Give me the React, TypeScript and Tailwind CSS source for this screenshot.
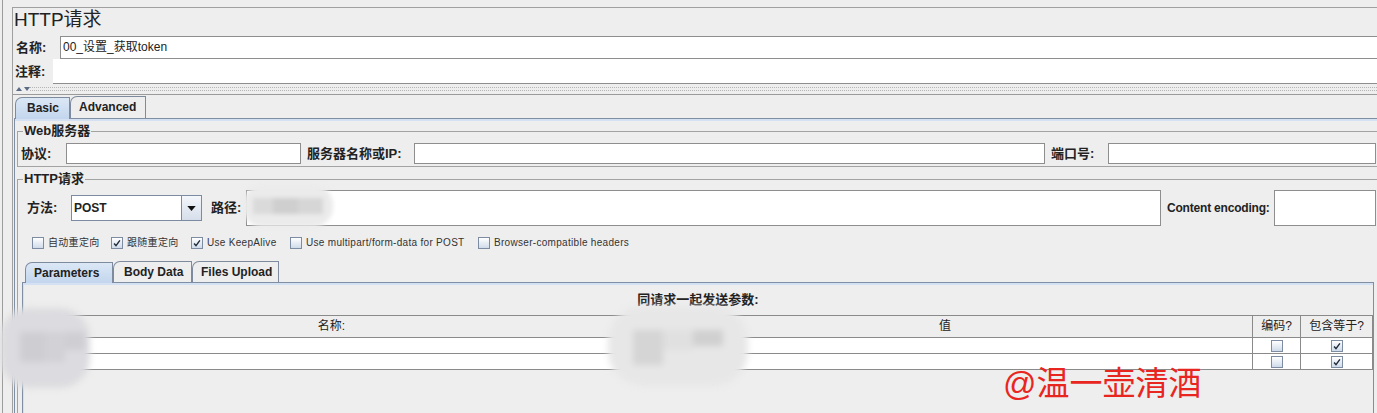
import type { ReactNode } from 'react'

// Swing "Metal" style HTTP sampler panel

const CheckMark = () => (
  <svg viewBox="0 0 12 12" className="w-[10px] h-[10px]">
    <path d="M2.5 6.5 L4.8 9.2 L9.5 2.8" fill="none" stroke="#1e2a3a" strokeWidth="1.7" />
  </svg>
)

function CheckBox({ checked }: { checked?: boolean }) {
  return (
    <span className="flex items-center justify-center w-[12px] h-[12px] shrink-0 border border-[#7d8ca3] bg-linear-to-b from-white to-[#cfdbea]">
      {checked && <CheckMark />}
    </span>
  )
}

function Label({ children, className }: { children: ReactNode; className: string }) {
  return <span className={`shrink-0 text-[13px] leading-[16px] font-bold text-[#222] ${className}`}>{children}</span>
}

function Tab({ label, active, className }: { label: string; active?: boolean; className: string }) {
  return (
    <div
      className={`h-full border-t border-l border-r border-[#7e8b9e] rounded-tl-[7px] text-[12px] leading-[20px] font-bold text-[#222] ${
        active ? 'bg-linear-to-b from-[#dbe7f5] to-[#c3d6ee] -mb-px' : 'bg-[#eeeeee]'
      } ${className}`}
    >
      {label}
    </div>
  )
}

function Group({ title, children, className }: { title: string; children: ReactNode; className: string }) {
  return (
    <fieldset className={`mx-[2px] border border-[#a3a3a3] ${className}`}>
      <legend className="ml-[5px] px-px text-[13px] leading-[14px] font-bold text-[#222]">{title}</legend>
      {children}
    </fieldset>
  )
}

const options = [
  { label: '自动重定向', checked: false, w: 'w-[79px]' },
  { label: '跟随重定向', checked: true, w: 'w-[80px]' },
  { label: 'Use KeepAlive', checked: true, w: 'w-[99px]' },
  { label: 'Use multipart/form-data for POST', checked: false, w: 'w-[188px]' },
  { label: 'Browser-compatible headers', checked: false, w: 'w-[160px]' },
]

const rows = [
  { encode: false, equals: true },
  { encode: false, equals: true },
]

export default function App() {
  return (
    <div className="relative w-[1377px] h-[413px] overflow-hidden bg-[#eeeeee] font-[Liberation_Sans,Noto_Sans_CJK_SC,sans-serif] text-[#222]">
      <div className="h-full pl-[2px]">
        <div className="h-full border-l border-[#9c9c9c] pl-[9px] pt-[7px]">
          <div className="w-[1375px] h-full border-l border-t border-[#a0a0a0]">
            {/* title */}
            <div className="h-[28px] pt-[2px] pl-px text-[19px] leading-[20px]">HTTP请求</div>

            {/* name / comment */}
            <div className="flex h-[23px]">
              <Label className="w-[47px] pl-[3px] self-center">名称:</Label>
              <div className="flex-1 bg-white border border-[#8e8e8e] pl-[2px] text-[12px] leading-[20px]">00_设置_获取token</div>
            </div>
            <div className="flex h-[25px]">
              <Label className="w-[40px] pl-[2px] self-center">注释:</Label>
              <div className="flex-1 bg-white border-b border-[#8e8e8e]" />
            </div>

            {/* splitter */}
            <div className="flex items-center h-[11px] border-b border-[#9a9a9a]">
              <svg viewBox="0 0 14 6" className="ml-[3px] w-[14px] h-[6px] shrink-0">
                <path d="M0 5 L3 1 L6 5 Z" fill="#5a6b85" />
                <path d="M8 1 L14 1 L11 5 Z" fill="#5a6b85" />
              </svg>
              <div className="flex-1 h-[4px] border-y border-dotted border-[#b4b4b4]" />
            </div>

            {/* Basic / Advanced */}
            <div className="mx-px mt-px">
              <div className="flex items-end h-[22px] pl-px">
                <Tab label="Basic" active className="w-[55px] pl-[11px] relative z-10" />
                <Tab label="Advanced" className="w-[76px] pl-[8px]" />
              </div>
              <div className="h-[300px] border-t border-l border-r border-[#7f8ea3] shadow-[inset_0_2px_0_#d3e1f2] pt-[5px]">
                <Group title="Web服务器" className="pb-[2px]">
                  <div className="flex items-center h-[21px] mt-[5px] pl-[3px] pr-[6px]">
                    <Label className="w-[45px]">协议:</Label>
                    <div className="w-[235px] h-full bg-white border border-[#8e8e8e]" />
                    <Label className="ml-[6px] w-[107px]">服务器名称或IP:</Label>
                    <div className="w-[631px] h-full bg-white border border-[#8e8e8e]" />
                    <Label className="ml-[6px] w-[57px]">端口号:</Label>
                    <div className="flex-1 h-full bg-white border border-[#8e8e8e]" />
                  </div>
                </Group>

                <Group title="HTTP请求" className="mt-[5px] h-[260px]">
                  <div className="flex items-center h-[36px] mt-[4px] pl-[9px] pr-[6px]">
                    <Label className="w-[44px]">方法:</Label>
                    <div className="flex w-[131px] h-[26px] bg-white border border-[#7c8ba2]">
                      <span className="flex-1 pl-[2px] text-[12px] leading-[24px] font-bold">POST</span>
                      <span className="flex items-center justify-center w-[20px] h-full border-l border-[#7c8ba2] bg-linear-to-b from-[#f4f7fb] to-[#d5deea]">
                        <svg viewBox="0 0 10 6" className="w-[9px] h-[5px]">
                          <path d="M0 0 L10 0 L5 6 Z" fill="#111" />
                        </svg>
                      </span>
                    </div>
                    <Label className="ml-[9px] w-[35px]">路径:</Label>
                    <div className="w-[915px] h-full bg-white border border-[#8e8e8e]" />
                    <span className="ml-[6px] w-[107px] shrink-0 text-[12px] tracking-[-0.2px] font-bold">Content encoding:</span>
                    <div className="flex-1 h-full bg-white border border-[#8e8e8e]" />
                  </div>

                  <div className="flex items-center h-[14px] mt-[10px] pl-[14px]">
                    {options.map(o => (
                      <div key={o.label} className={`flex items-center gap-[4px] shrink-0 ${o.w}`}>
                        <CheckBox checked={o.checked} />
                        <span className="text-[10px] leading-[12px] tracking-[0.3px] text-[#333]">{o.label}</span>
                      </div>
                    ))}
                  </div>

                  {/* Parameters / Body Data / Files Upload */}
                  <div className="ml-[4px] mt-[11px] w-[1352px]">
                    <div className="flex items-end h-[21px] pl-[3px]">
                      <Tab label="Parameters" active className="w-[88px] pl-[8px] relative z-10" />
                      <Tab label="Body Data" className="w-[79px] pl-[10px]" />
                      <Tab label="Files Upload" className="w-[87px] pl-[8px]" />
                    </div>
                    <div className="h-[140px] border-t border-l border-r border-[#7f8ea3] shadow-[inset_1px_2px_0_#d3e1f2] pt-[10px]">
                      <div className="text-center text-[13px] leading-[14px] font-bold">同请求一起发送参数:</div>
                      <div className="ml-[2px] mt-[8px] w-[1348px] grid grid-cols-[613px_614px_48px_73px] border-t border-[#8a8a8a] text-[12px]">
                        <div className="h-[22px] leading-[21px] text-center border-b border-[#8a8a8a]">名称:</div>
                        <div className="h-[22px] leading-[21px] text-center border-b border-[#8a8a8a]">值</div>
                        <div className="h-[22px] leading-[21px] text-center border-b border-l border-[#8a8a8a]">编码?</div>
                        <div className="h-[22px] leading-[21px] text-center border-b border-l border-r border-[#8a8a8a]">包含等于?</div>
                        {rows.map((r, i) => (
                          <div key={i} className="contents">
                            <div className="h-[16px] bg-white border-b border-[#8a8a8a]" />
                            <div className="h-[16px] bg-white border-b border-[#8a8a8a]" />
                            <div className="flex items-center justify-center h-[16px] bg-white border-b border-l border-[#8a8a8a]">
                              <CheckBox checked={r.encode} />
                            </div>
                            <div className="flex items-center justify-center h-[16px] bg-white border-b border-l border-r border-[#8a8a8a]">
                              <CheckBox checked={r.equals} />
                            </div>
                          </div>
                        ))}
                      </div>
                    </div>
                  </div>
                </Group>
              </div>
            </div>
          </div>
        </div>
      </div>

      {/* masked values */}
      <div className="absolute left-[243px] top-[185px] w-[90px] h-[42px] rounded-[20px] bg-[#ebebeb] blur-[2px] flex items-center pl-[10px] gap-0">
        <div className="w-[20px] h-[16px] bg-[#dadada]" />
        <div className="w-[25px] h-[16px] bg-[#cfcfcf]" />
        <div className="w-[25px] h-[16px] bg-[#d6d6d6]" />
      </div>
      <div className="absolute left-0 top-[308px] w-[90px] h-[80px] rounded-[30px] bg-[#dcdce0] blur-[3px] pt-[24px] pl-[20px]">
        <div className="flex">
          <div className="w-[25px] h-[30px] bg-[#cdcdd2]" />
          <div className="w-[20px] h-[30px] bg-[#d2d2d6]" />
          <div className="w-[20px] h-[18px] bg-[#cfcfd3]" />
        </div>
      </div>
      <div className="absolute left-[608px] top-[306px] w-[140px] h-[80px] rounded-[35px] bg-[#e7e7e7] blur-[3px] pt-[24px] pl-[25px]">
        <div className="flex">
          <div className="w-[30px] h-[35px] bg-[#d5d5d5]" />
          <div className="w-[30px] h-[20px] bg-[#e0e0e0]" />
          <div className="w-[30px] h-[16px] bg-[#d0d0d0]" />
        </div>
      </div>

      <div className="absolute left-[1003px] top-[365px] text-[33px] leading-[38px] text-[#e8261f] font-[Liberation_Sans,Noto_Sans_CJK_SC,sans-serif]">@温一壶清酒</div>
    </div>
  )
}
